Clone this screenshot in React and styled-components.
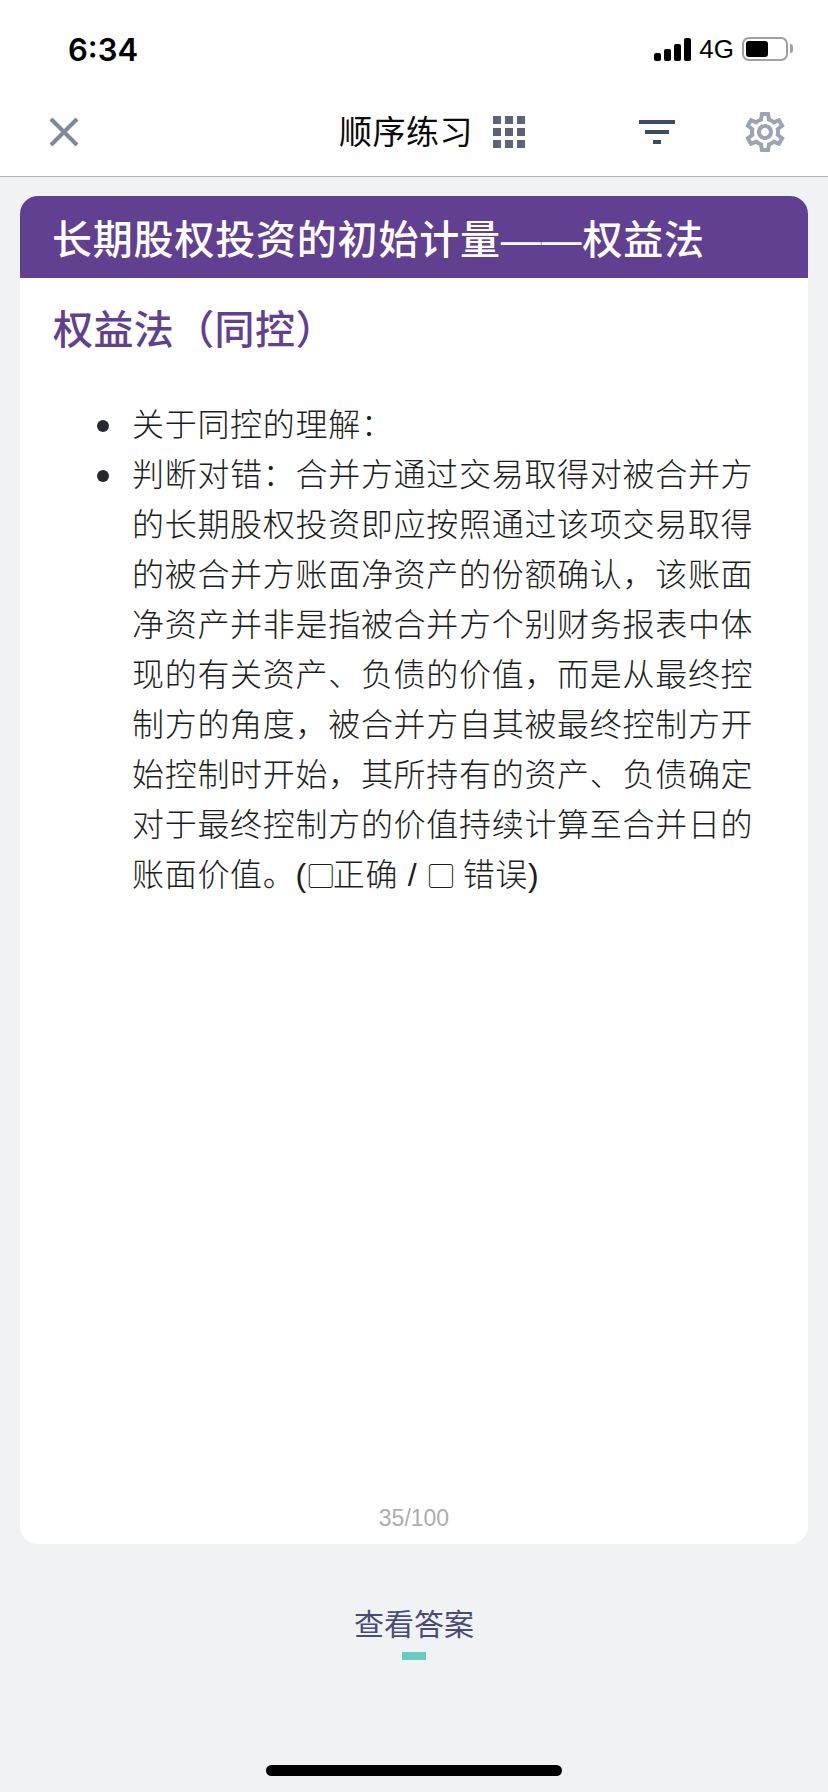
import React from 'react'
import styled, { createGlobalStyle } from 'styled-components'
import { MdOutlineSettings } from 'react-icons/md'

const GlobalStyle = createGlobalStyle`
    html, body {
        margin: 0;
        padding: 0;
        background: #f0f2f4;
    }
    * {
        box-sizing: border-box;
    }
`

const CJK = `"Liberation Sans", "Noto Sans CJK SC", sans-serif`

const Page = styled.div`
    width: 828px;
    height: 1792px;
    display: flex;
    flex-direction: column;
    background: #f0f2f4;
    font-family: ${CJK};
    overflow: hidden;
`

const Header = styled.header`
    background: #fefefe;
    border-bottom: 1px solid #b4b4b6;
    height: 177px;
    flex-shrink: 0;
`

const StatusBar = styled.div`
    height: 88px;
    display: flex;
    align-items: center;
    padding: 10px 34px 0 68px;
    justify-content: space-between;
`

const Time = styled.span`
    font-family: Inter, sans-serif;
    font-size: 31px;
    font-weight: 600;
    color: #000;
`

const StatusIcons = styled.div`
    display: flex;
    align-items: center;
    gap: 8px;
`

const Signal = styled.div`
    display: flex;
    align-items: flex-end;
    gap: 3px;
    height: 23px;
`

const SignalBar = styled.i`
    display: block;
    width: 7px;
    height: ${(p) => p.$h}px;
    background: #000;
    border-radius: 2px;
`

const Network = styled.span`
    font-family: "Liberation Sans", sans-serif;
    font-size: 26px;
    color: #000;
    line-height: 26px;
`

const Battery = styled.div`
    position: relative;
    width: 46px;
    height: 24px;
    border: 2px solid #a0a0a2;
    border-radius: 7px;
    padding: 2px;
    margin-right: 6px;
    &::after {
        content: '';
        position: absolute;
        right: -7px;
        top: 5px;
        width: 3px;
        height: 9px;
        background: #a0a0a2;
        border-radius: 0 3px 3px 0;
    }
`

const BatteryFill = styled.div`
    width: 22px;
    height: 100%;
    background: #000;
    border-radius: 3px;
`

const NavBar = styled.nav`
    height: 88px;
    display: flex;
    align-items: center;
    padding-left: 49px;
`

const NavTitle = styled.span`
    font-size: 33px;
    letter-spacing: 0.5px;
    color: #0a0a0a;
    margin-left: 260px;
    line-height: 1;
`

const GridIcon = styled.div`
    display: grid;
    grid-template-columns: repeat(3, 8px);
    grid-auto-rows: 8px;
    gap: 4px;
    margin-left: 20px;
`

const GridCell = styled.i`
    display: block;
    background: #5f6275;
`

const FilterIcon = styled.div`
    display: flex;
    flex-direction: column;
    align-items: center;
    gap: 6px;
    width: 36px;
    margin-left: 114px;
`

const FilterLine = styled.i`
    display: block;
    width: ${(p) => p.$w}px;
    height: 4px;
    background: #3f4a66;
`

const GearButton = styled.div`
    display: flex;
    margin-left: 66px;
    color: #9da3b0;
    font-size: 48px;
`

const Main = styled.main`
    flex: 1;
    display: flex;
    flex-direction: column;
    padding: 19px 20px 0;
`

const Card = styled.section`
    height: 1348px;
    background: #fff;
    border-radius: 18px;
    display: flex;
    flex-direction: column;
    overflow: hidden;
    flex-shrink: 0;
`

const CardHead = styled.h1`
    margin: 0;
    height: 82px;
    padding: 0 32px;
    display: flex;
    align-items: center;
    background: #613f91;
    color: #fff;
    font-size: 40px;
    letter-spacing: 0.8px;
    font-weight: 500;
    white-space: nowrap;
`

const SubTitle = styled.h2`
    margin: 0;
    padding: 26px 33px 0;
    color: #613f91;
    font-size: 40px;
    letter-spacing: 0.4px;
    font-weight: 500;
    line-height: 52px;
`

const Content = styled.ul`
    flex: 1;
    margin: 0;
    padding: 44px 48px 0 112px;
    list-style: none;
    color: #1c1e22;
    font-size: 32px;
    font-weight: 300;
    line-height: 50px;
    letter-spacing: 0.7px;
`

const Item = styled.li`
    position: relative;
    &::before {
        content: '';
        position: absolute;
        left: -35px;
        top: 20px;
        width: 12px;
        height: 12px;
        border-radius: 50%;
        background: #26282d;
    }
`

const CheckBox = styled.span`
    display: inline-block;
    width: 24px;
    margin: 0 1px;
    text-align: center;
    font-size: 26px;
    font-weight: 700;
    line-height: 26px;
    letter-spacing: 0;
`

const Pager = styled.div`
    text-align: center;
    color: #adadad;
    font-size: 23px;
    line-height: 26px;
    padding-bottom: 13px;
`

const AnswerButton = styled.div`
    display: flex;
    flex-direction: column;
    align-items: center;
    margin-top: 59px;
    color: #4a4a75;
    font-size: 30px;
    line-height: 44px;
`

const AnswerMark = styled.i`
    display: block;
    width: 24px;
    height: 8px;
    margin-top: 5px;
    background: #66cdc0;
`

const HomeBar = styled.div`
    width: 296px;
    height: 11px;
    border-radius: 6px;
    background: #000;
    margin: auto auto 16px;
`

export default function App() {
    return (
        <Page>
            <GlobalStyle />
            <Header>
                <StatusBar>
                    <Time>6:34</Time>
                    <StatusIcons>
                        <Signal>
                            <SignalBar $h={8} />
                            <SignalBar $h={12} />
                            <SignalBar $h={17} />
                            <SignalBar $h={23} />
                        </Signal>
                        <Network>4G</Network>
                        <Battery>
                            <BatteryFill />
                        </Battery>
                    </StatusIcons>
                </StatusBar>
                <NavBar>
                    <svg width="30" height="30" viewBox="0 0 30 30" fill="none" stroke="#7f8999" strokeWidth="4">
                        <path d="M2 2 L28 28 M28 2 L2 28" />
                    </svg>
                    <NavTitle>顺序练习</NavTitle>
                    <GridIcon>
                        {Array.from({ length: 9 }).map((_, i) => (
                            <GridCell key={i} />
                        ))}
                    </GridIcon>
                    <FilterIcon>
                        <FilterLine $w={36} />
                        <FilterLine $w={24} />
                        <FilterLine $w={8} />
                    </FilterIcon>
                    <GearButton>
                        <MdOutlineSettings />
                    </GearButton>
                </NavBar>
            </Header>
            <Main>
                <Card>
                    <CardHead>长期股权投资的初始计量——权益法</CardHead>
                    <SubTitle>权益法（同控）</SubTitle>
                    <Content>
                        <Item>关于同控的理解：</Item>
                        <Item>
                            判断对错：合并方通过交易取得对被合并方的长期股权投资即应按照通过该项交易取得的被合并方账面净资产的份额确认，该账面净资产并非是指被合并方个别财务报表中体现的有关资产、负债的价值，而是从最终控制方的角度，被合并方自其被最终控制方开始控制时开始，其所持有的资产、负债确定对于最终控制方的价值持续计算至合并日的账面价值。(<CheckBox>▢</CheckBox>正确 / <CheckBox>▢</CheckBox> 错误)
                        </Item>
                    </Content>
                    <Pager>35/100</Pager>
                </Card>
                <AnswerButton>
                    查看答案
                    <AnswerMark />
                </AnswerButton>
                <HomeBar />
            </Main>
        </Page>
    )
}
